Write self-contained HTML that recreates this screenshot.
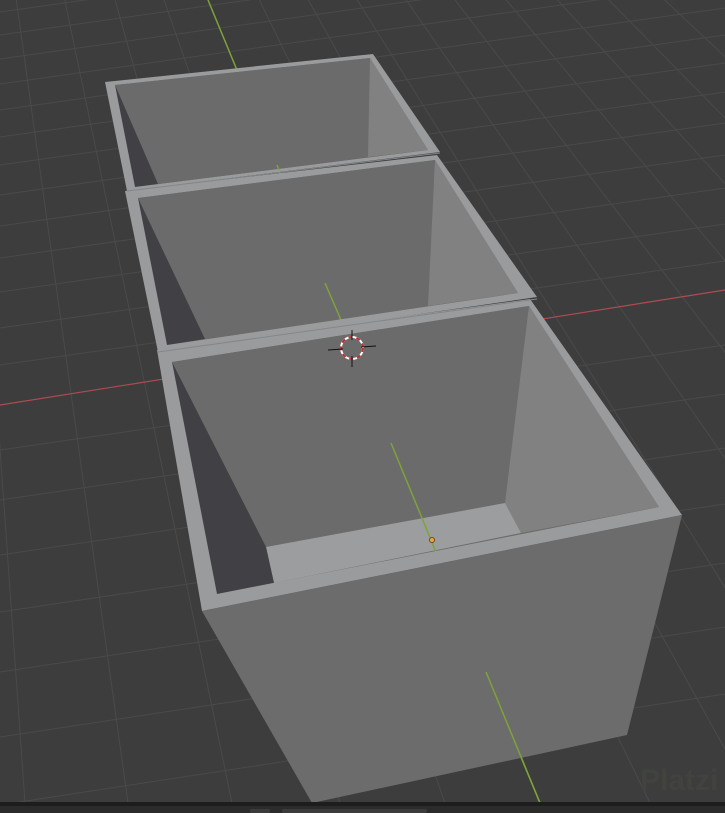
<!DOCTYPE html>
<html><head><meta charset="utf-8"><style>
html,body{margin:0;padding:0;background:#3d3d3d;overflow:hidden}
svg{display:block}
</style></head><body>
<svg width="725" height="813" viewBox="0 0 725 813" xmlns="http://www.w3.org/2000/svg">
<rect width="725" height="813" fill="#3d3d3d"/>
<g stroke="#4a4a4a" stroke-width="1" fill="none">
<line x1="0" y1="12" x2="725" y2="-90"/>
<line x1="0" y1="35" x2="725" y2="-67"/>
<line x1="0" y1="59" x2="725" y2="-43"/>
<line x1="0" y1="84" x2="725" y2="-18"/>
<line x1="0" y1="110" x2="725" y2="8"/>
<line x1="0" y1="137" x2="725" y2="35"/>
<line x1="0" y1="165" x2="725" y2="63"/>
<line x1="0" y1="195" x2="725" y2="92"/>
<line x1="0" y1="226" x2="725" y2="123"/>
<line x1="0" y1="258" x2="725" y2="155"/>
<line x1="0" y1="292" x2="725" y2="188"/>
<line x1="0" y1="328" x2="725" y2="224"/>
<line x1="0" y1="365" x2="725" y2="261"/>
<line x1="0" y1="450" x2="725" y2="345"/>
<line x1="0" y1="500" x2="725" y2="394"/>
<line x1="0" y1="555" x2="725" y2="448"/>
<line x1="0" y1="612" x2="725" y2="504"/>
<line x1="0" y1="672" x2="725" y2="563"/>
<line x1="0" y1="737" x2="725" y2="627"/>
<line x1="0" y1="805" x2="725" y2="694"/>
<line x1="-81" y1="-700" x2="-180" y2="803"/>
<line x1="-81" y1="-700" x2="-78" y2="803"/>
<line x1="-81" y1="-700" x2="25" y2="803"/>
<line x1="-81" y1="-700" x2="128" y2="803"/>
<line x1="-81" y1="-700" x2="232" y2="803"/>
<line x1="-81" y1="-700" x2="340" y2="803"/>
<line x1="-81" y1="-700" x2="445" y2="803"/>
<line x1="-81" y1="-700" x2="650" y2="803"/>
<line x1="-81" y1="-700" x2="755" y2="803"/>
<line x1="-81" y1="-700" x2="860" y2="803"/>
<line x1="-81" y1="-700" x2="965" y2="803"/>
<line x1="-81" y1="-700" x2="1070" y2="803"/>
<line x1="-81" y1="-700" x2="1180" y2="803"/>
<line x1="-81" y1="-700" x2="1290" y2="803"/>
<line x1="-81" y1="-700" x2="1400" y2="803"/>
<line x1="-81" y1="-700" x2="1520" y2="803"/>
<line x1="-81" y1="-700" x2="1650" y2="803"/>
<line x1="-81" y1="-700" x2="1800" y2="803"/>
</g>
<line x1="0" y1="405" x2="725" y2="290" stroke="#b04a52" stroke-width="1.2"/>
<line x1="208" y1="0" x2="540" y2="803" stroke="#7fa23a" stroke-width="1.5"/>

<!-- Box 1 -->
<polygon points="115,85 370,58 428,150 135,187" fill="#6a6b6a"/>
<polygon points="370,58 368,157 428,150" fill="#808180"/>
<polygon points="115,85 158,184 135,187" fill="#414044"/>
<path fill-rule="evenodd" fill="#9a9b9c" d="M105,82 L373,54 L440,152 L127,191 Z M115,85 L135,187 L428,150 L370,58 Z"/>
<line x1="277" y1="165" x2="279" y2="170" stroke="#7fa23a" stroke-width="1.5"/>

<!-- Box 2 -->
<polygon points="138,198 435,160 518,293 167,345" fill="#6a6b6a"/>
<polygon points="435,160 428,306 518,293" fill="#808180"/>
<polygon points="138,198 205,339 167,345" fill="#414044"/>
<line x1="325" y1="283" x2="341" y2="320" stroke="#7fa23a" stroke-width="1.5"/>
<path fill-rule="evenodd" fill="#9a9b9c" d="M125,191 L437,155 L537,297 L158,352 Z M138,198 L167,345 L518,293 L435,160 Z"/>
<line x1="127" y1="191" x2="440" y2="153" stroke="#858687" stroke-width="1"/>

<!-- Box 3 -->
<polygon points="172,362 529,306 659,507 217,594" fill="#6a6b6a"/>
<polygon points="529,306 505,503 521,533 659,507" fill="#808180"/>
<polygon points="266,547 505,503 521,533 274,583" fill="#9c9d9e"/>
<polygon points="172,362 266,547 274,583 217,594" fill="#414044"/>
<line x1="391" y1="443" x2="436" y2="552" stroke="#7fa23a" stroke-width="1.5"/>
<path fill-rule="evenodd" fill="#9a9b9c" d="M157,350 L530,299 L682,515 L202,611 Z M172,362 L217,594 L659,507 L529,306 Z"/>
<line x1="158" y1="352" x2="537" y2="299" stroke="#858687" stroke-width="1"/>
<polygon points="202,611 682,515 627,735 312,803" fill="#6b6c6b"/>
<line x1="486" y1="672" x2="540" y2="803" stroke="#7fa23a" stroke-width="1.5"/>
<circle cx="432" cy="540" r="2.6" fill="#f0a030" stroke="#222" stroke-width="0.6"/>

<g>
<circle cx="352" cy="348" r="11" fill="none" stroke="#fff" stroke-width="2"/>
<circle cx="352" cy="348" r="11" fill="none" stroke="#c03030" stroke-width="2" stroke-dasharray="4 4"/>
<line x1="328" y1="350" x2="343" y2="349" stroke="#111" stroke-width="1"/>
<line x1="361" y1="347" x2="376" y2="346" stroke="#111" stroke-width="1"/>
<line x1="352" y1="330" x2="352" y2="340" stroke="#111" stroke-width="1"/>
<line x1="352" y1="356" x2="352" y2="367" stroke="#111" stroke-width="1"/>
</g>

<text x="640" y="790" font-family="Liberation Sans, sans-serif" font-size="30" font-weight="bold" fill="#41433e">Platzi</text>

<rect x="0" y="802" width="725" height="4" fill="#1d1d1d"/>
<rect x="0" y="806" width="725" height="7" fill="#2b2b2b"/>
<rect x="250" y="809" width="20" height="4" rx="2" fill="#3b3b3b"/>
<rect x="282" y="809" width="145" height="4" rx="2" fill="#3b3b3b"/>
</svg>
</body></html>
